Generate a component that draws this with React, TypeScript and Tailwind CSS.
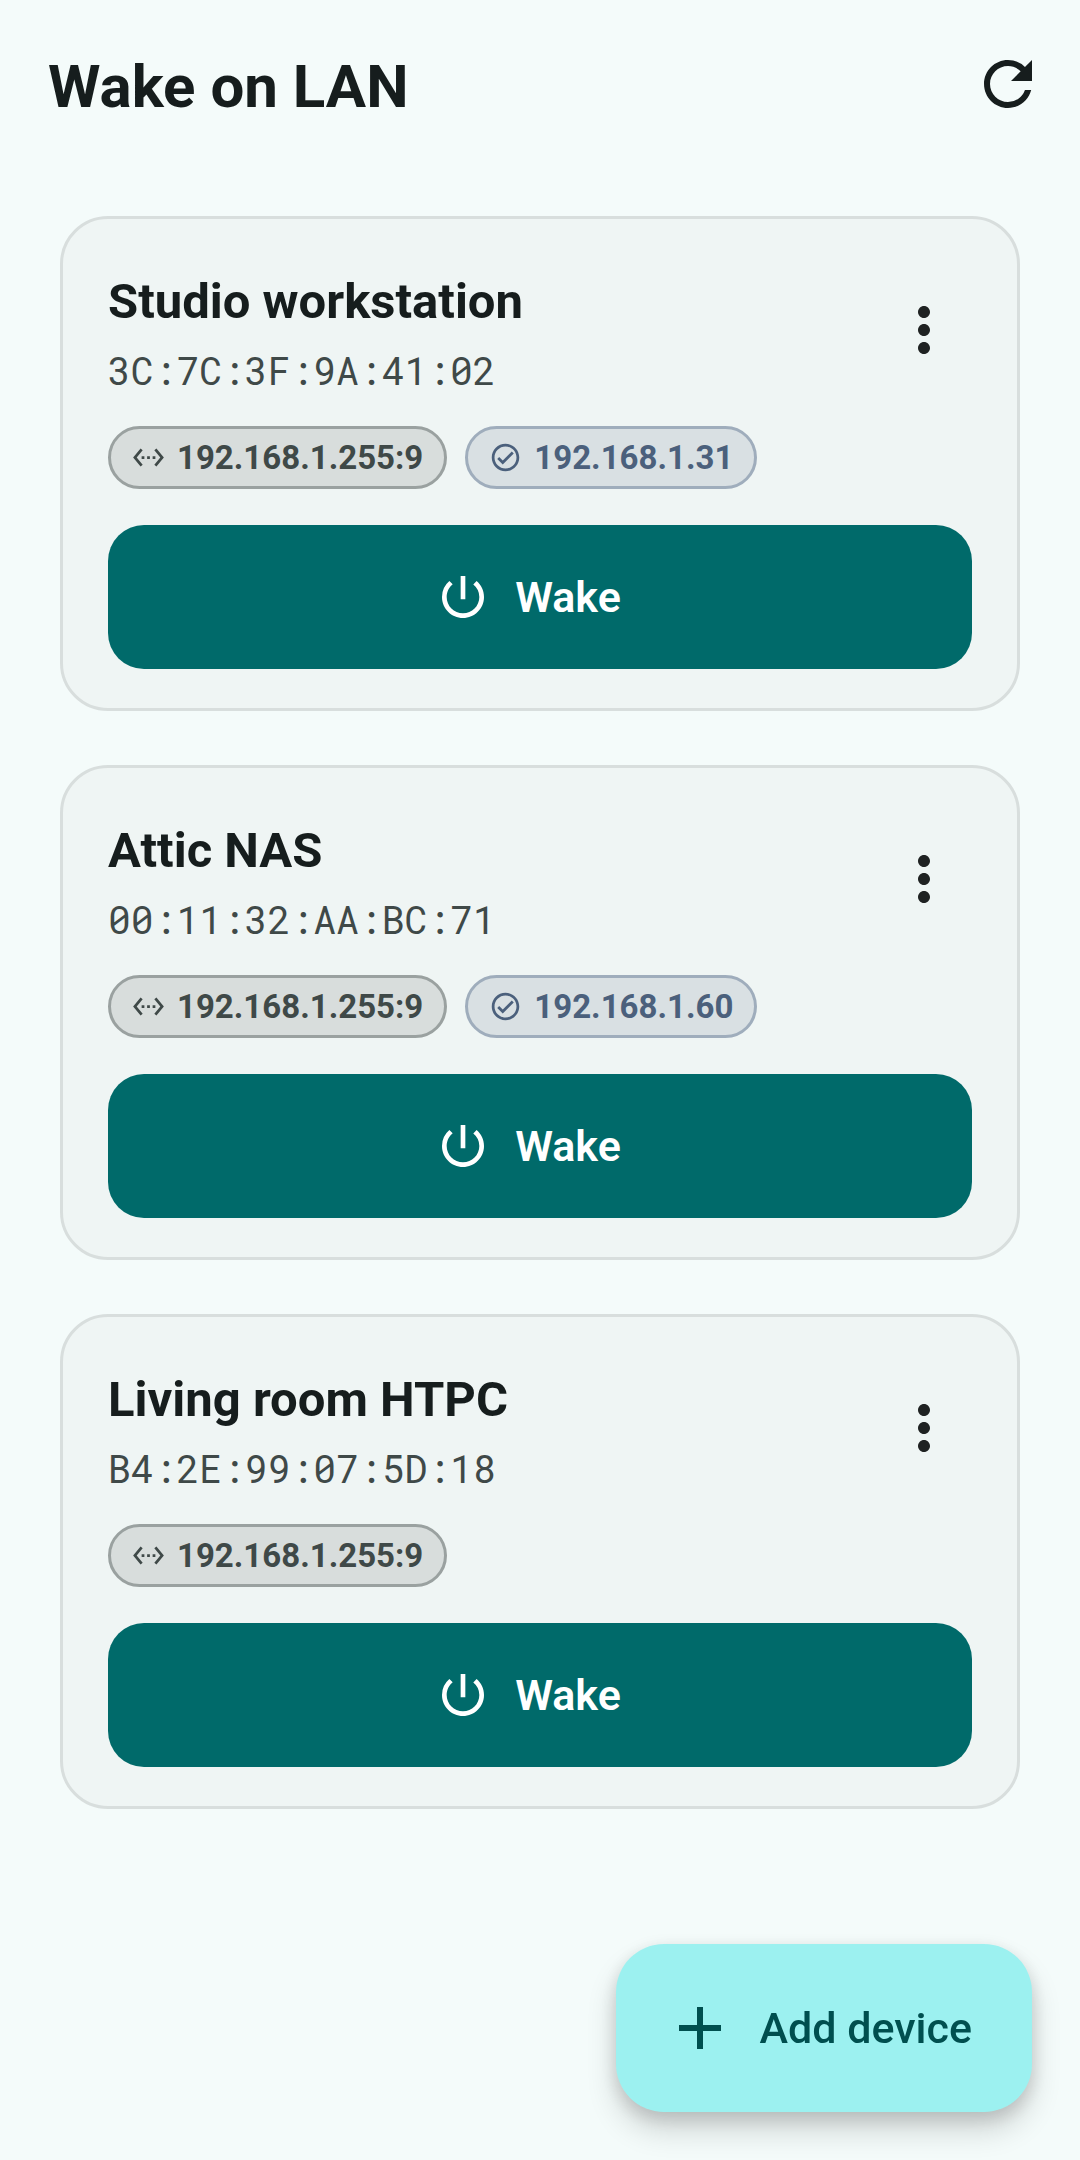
type Device = { name: string; mac: string; target: string; ip?: string }

const devices: Device[] = [
  { name: "Studio workstation", mac: "3C:7C:3F:9A:41:02", target: "192.168.1.255:9", ip: "192.168.1.31" },
  { name: "Attic NAS", mac: "00:11:32:AA:BC:71", target: "192.168.1.255:9", ip: "192.168.1.60" },
  { name: "Living room HTPC", mac: "B4:2E:99:07:5D:18", target: "192.168.1.255:9" },
]

const icons = {
  refresh:
    "M17.65 6.35A7.958 7.958 0 0 0 12 4c-4.42 0-7.99 3.58-7.99 8s3.57 8 7.99 8c3.73 0 6.84-2.55 7.73-6h-2.08A5.99 5.99 0 0 1 12 18c-3.31 0-6-2.69-6-6s2.69-6 6-6c1.66 0 3.14.69 4.22 1.78L13 11h7V4l-2.35 2.35z",
  more: "M12 8c1.1 0 2-.9 2-2s-.9-2-2-2-2 .9-2 2 .9 2 2 2zm0 2c-1.1 0-2 .9-2 2s.9 2 2 2 2-.9 2-2-.9-2-2-2zm0 6c-1.1 0-2 .9-2 2s.9 2 2 2 2-.9 2-2-.9-2-2-2z",
  ethernet:
    "M7.77 6.76 6.23 5.48.82 12l5.41 6.52 1.54-1.28L3.42 12l4.35-5.24zM7 13h2v-2H7v2zm10-2h-2v2h2v-2zm-6 2h2v-2h-2v2zm6.77-7.52-1.54 1.28L20.58 12l-4.35 5.24 1.54 1.28L23.18 12l-5.41-6.52z",
  check:
    "M12 2C6.48 2 2 6.48 2 12s4.48 10 10 10 10-4.48 10-10S17.52 2 12 2zm0 18c-4.41 0-8-3.59-8-8s3.59-8 8-8 8 3.59 8 8-3.59 8-8 8zm4.59-12.42L10 14.17l-2.59-2.58L6 13l4 4 8-8-1.41-1.42z",
  power:
    "M13 3h-2v10h2V3zm4.83 2.17-1.42 1.42A6.92 6.92 0 0 1 19 12c0 3.87-3.13 7-7 7s-7-3.13-7-7c0-2.19 1.01-4.14 2.58-5.42L6.17 5.17A8.932 8.932 0 0 0 3 12c0 4.97 4.03 9 9 9s9-4.03 9-9c0-2.74-1.23-5.18-3.17-6.83z",
  add: "M19 13h-6v6h-2v-6H5v-2h6V5h2v6h6v2z",
}

function Icon({ name, className }: { name: keyof typeof icons; className: string }) {
  return (
    <svg viewBox="0 0 24 24" fill="currentColor" aria-hidden="true" className={`shrink-0 ${className}`}>
      <path d={icons[name]} />
    </svg>
  )
}

function Chip({ icon, text, className }: { icon: keyof typeof icons; text: string; className: string }) {
  return (
    <span
      className={`flex items-center gap-3 h-[63px] px-[21px] border-3 rounded-full text-[33px] leading-none font-bold ${className}`}
    >
      <Icon name={icon} className="size-[33px]" />
      {text}
    </span>
  )
}

function DeviceCard({ device }: { device: Device }) {
  return (
    <li className="rounded-[48px] border-3 border-[#d8dedd] bg-[#eff5f4] px-[45px] py-[39px]">
      <div className="flex h-36 items-center justify-between">
        <div className="flex h-full min-w-0 flex-col gap-[5px] pt-2">
          <h2 className="truncate text-[49px] leading-[72px] font-bold text-[#161d1d]">{device.name}</h2>
          <p className="font-['Roboto_Mono','Liberation_Mono',monospace] text-[38px] leading-[54px] text-[#3f4948]">
            {device.mac}
          </p>
        </div>
        <button
          type="button"
          aria-label={`Options for ${device.name}`}
          className="flex size-24 items-center justify-center rounded-full text-[#1f2222]"
        >
          <Icon name="more" className="size-18" />
        </button>
      </div>

      <div className="mt-6 flex flex-wrap gap-[18px]">
        <Chip icon="ethernet" text={device.target} className="border-[#9aa1a0] bg-[#d8dddc] text-[#3f4948]" />
        {device.ip && (
          <Chip icon="check" text={device.ip} className="border-[#9fadbc] bg-[#d9e0e3] text-[#4b607c]" />
        )}
      </div>

      <button
        type="button"
        className="mt-9 flex h-36 w-full items-center justify-center gap-6 rounded-[36px] bg-[#006a6a] pr-6 text-[43px] leading-[60px] font-semibold text-white"
      >
        <Icon name="power" className="size-14" />
        Wake
      </button>
    </li>
  )
}

export default function App() {
  return (
    <div className="min-h-screen bg-[#f4fbfa] font-['Roboto',sans-serif]">
      <header className="flex items-start justify-between pt-12 pr-9 pl-12 text-[#161d1d]">
        <h1 className="text-[60px] leading-[78px] font-bold">Wake on LAN</h1>
        <button type="button" aria-label="Refresh">
          <Icon name="refresh" className="size-18" />
        </button>
      </header>

      <main className="px-[60px] pt-[90px] pb-60">
        <ul className="flex flex-col gap-[54px]">
          {devices.map((d) => (
            <DeviceCard key={d.mac} device={d} />
          ))}
        </ul>
      </main>

      <button
        type="button"
        className="fixed right-12 bottom-12 flex h-42 items-center gap-6 rounded-[48px] bg-[#9cf1f0] pr-[60px] pl-12 text-[43px] leading-[60px] font-medium text-[#004f4f] shadow-[0_18px_30px_rgba(0,0,0,0.16),0_6px_18px_rgba(0,0,0,0.14)]"
      >
        <Icon name="add" className="size-18" />
        Add device
      </button>
    </div>
  )
}
